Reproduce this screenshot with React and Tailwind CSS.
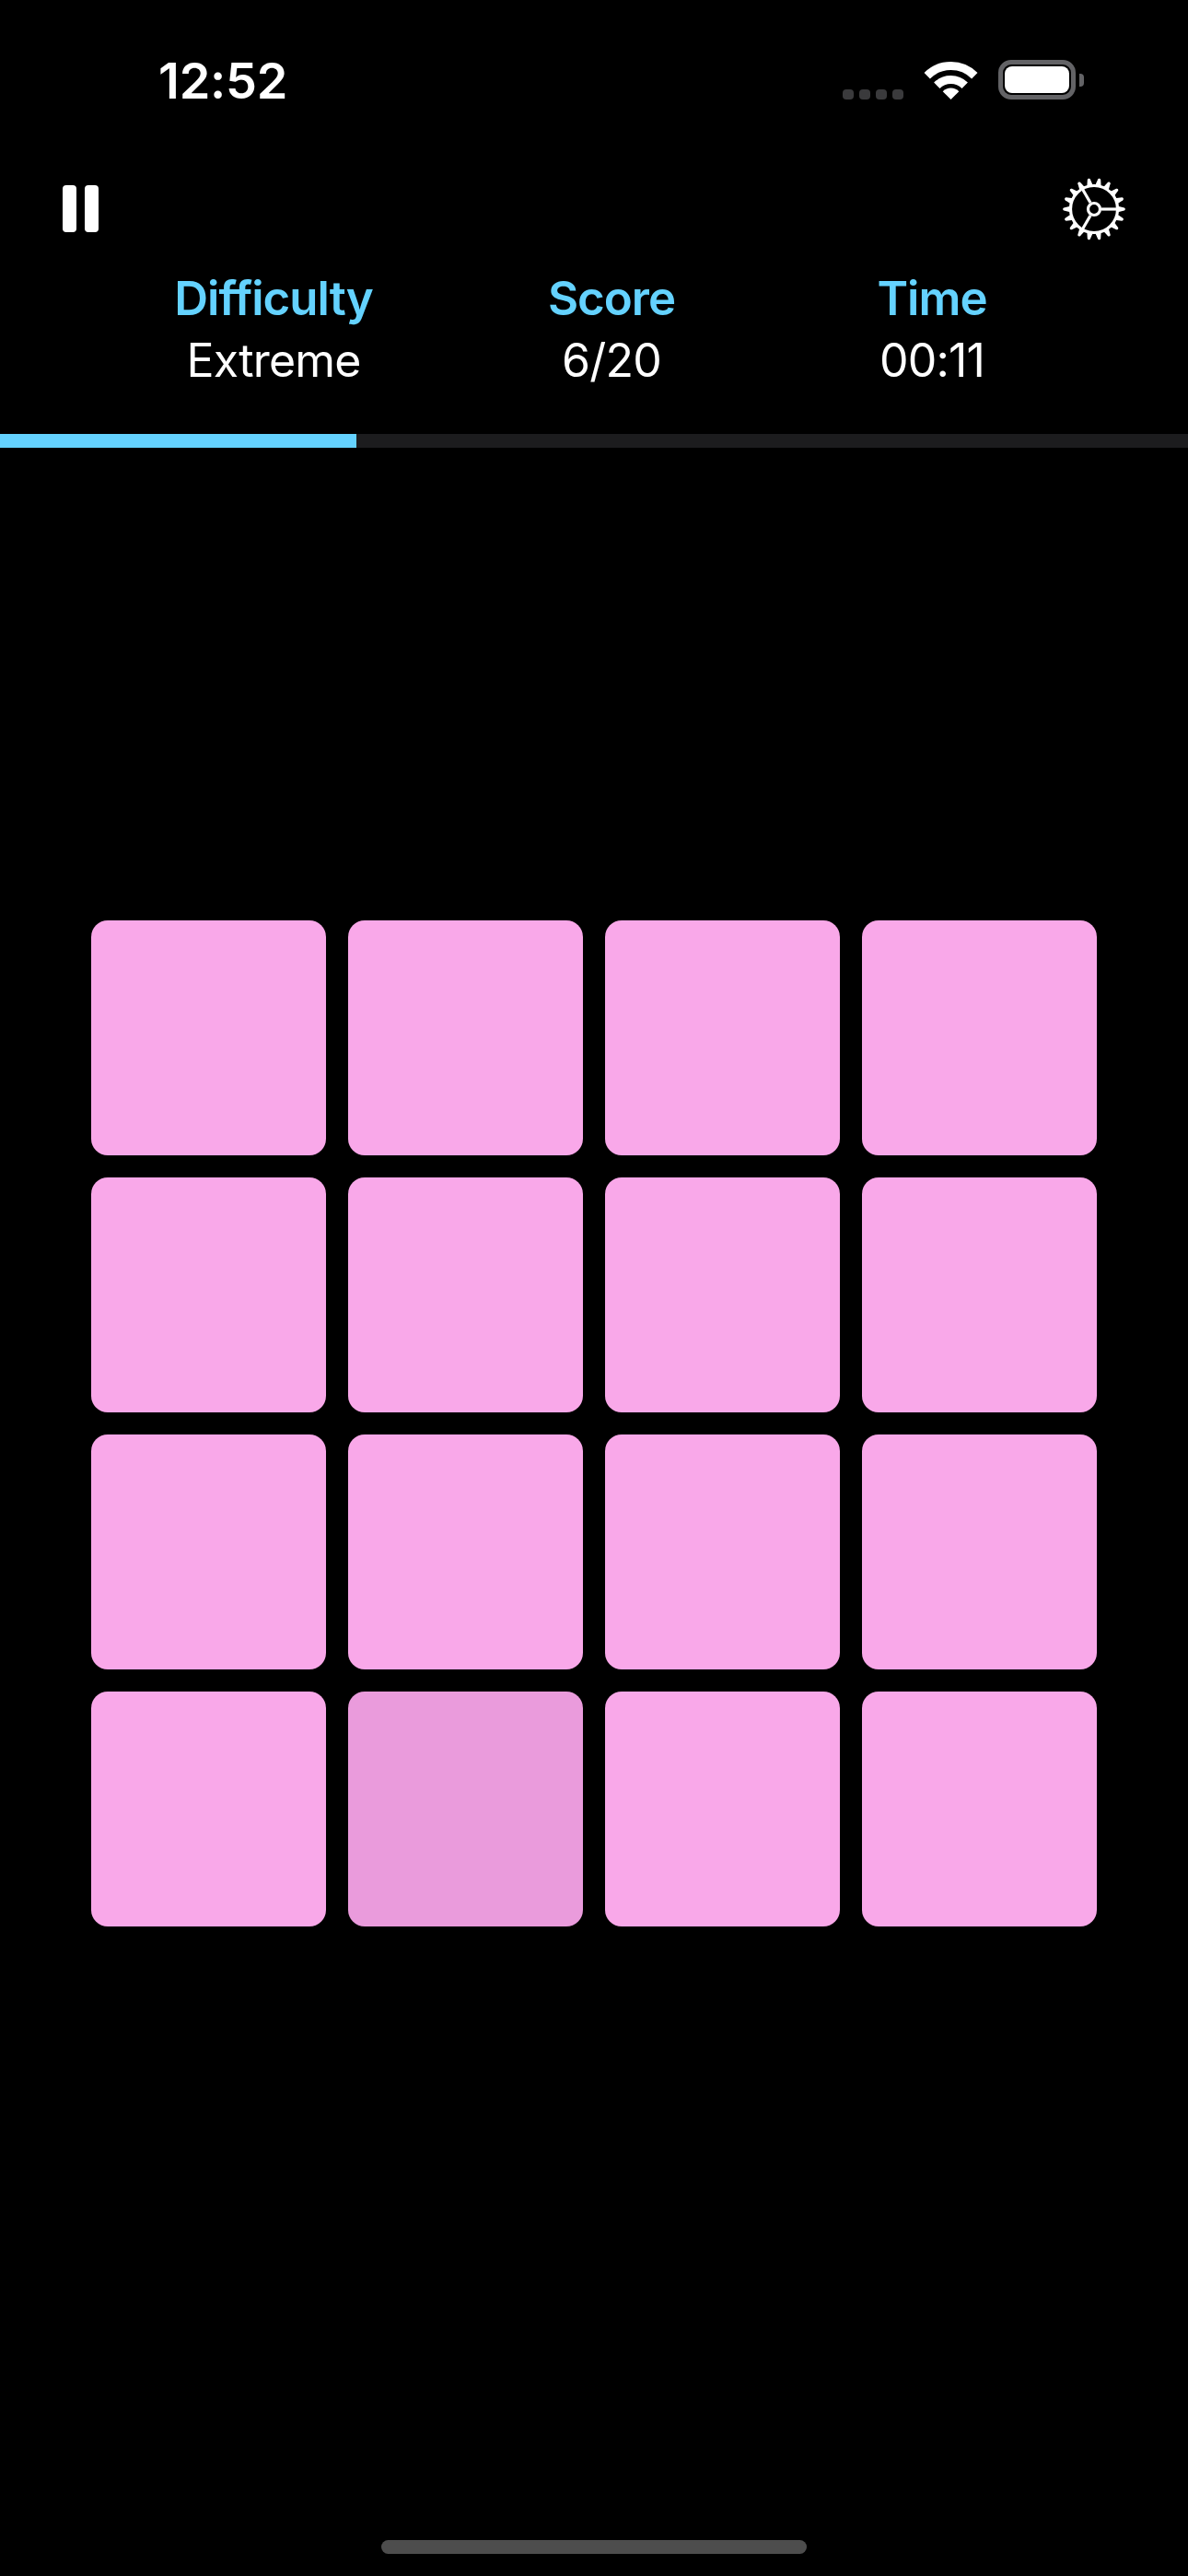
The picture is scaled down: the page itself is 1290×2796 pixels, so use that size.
const tiles = Array.from({ length: 16 }, (_, i) => i);

const teeth = Array.from({ length: 18 }, (_, i) => i * 20);

function GearIcon() {
  return (
    <svg width="70" height="70" viewBox="-35 -35 70 70" fill="none" stroke="white">
      <circle r="25.5" strokeWidth="3.2" />
      <circle r="6.5" strokeWidth="3.2" />
      {[0, 120, 240].map((a) => (
        <line key={a} x1="8" x2="26" strokeWidth="3.2" transform={`rotate(${a})`} />
      ))}
      {teeth.map((a) => (
        <path
          key={a}
          d="M25 -3.4 L32.8 -1.5 A1.6 1.6 0 0 1 32.8 1.5 L25 3.4 Z"
          fill="white"
          stroke="none"
          transform={`rotate(${a})`}
        />
      ))}
    </svg>
  );
}

function WifiIcon() {
  return (
    <svg width="57" height="41" viewBox="0 0 57 41" fill="none" className="overflow-visible">
      <path d="M2.7 15.2A36.5 36.5 0 0 1 54.3 15.2" stroke="white" strokeWidth="9" />
      <path d="M13.3 25.8A21.5 21.5 0 0 1 43.7 25.8" stroke="white" strokeWidth="9" />
      <path d="M28.5 41L19.7 32.2A12.5 12.5 0 0 1 37.3 32.2Z" fill="white" />
    </svg>
  );
}

function Stat({ label, value, className }) {
  return (
    <div className={`w-[300px] text-center ${className}`}>
      <div className="text-[51px] leading-[68px] font-semibold text-[#64d2ff] tracking-[-1px]">{label}</div>
      <div className="-mt-[1px] text-[50px] leading-[68px] font-normal text-white tracking-[-0.8px]">{value}</div>
    </div>
  );
}

export default function App() {
  return (
    <div className="w-[1290px] h-[2796px] bg-black flex flex-col font-['Inter',sans-serif] text-white">
      {/* status bar */}
      <div className="flex items-start h-[200px] pt-[55px]">
        <div className="ml-[172px] text-[54px] leading-[65px] font-semibold tracking-[-0.2px]">12:52</div>
        <div className="ml-auto mr-[113px] mt-[10px] flex items-end">
          <div className="flex gap-[6px] mr-[23px]">
            <span className="w-[12px] h-[11px] rounded-[4px] bg-[#3a3a3c]"></span>
            <span className="w-[12px] h-[11px] rounded-[4px] bg-[#3a3a3c]"></span>
            <span className="w-[12px] h-[11px] rounded-[4px] bg-[#3a3a3c]"></span>
            <span className="w-[12px] h-[11px] rounded-[4px] bg-[#3a3a3c]"></span>
          </div>
          <WifiIcon />
          <div className="ml-[23px] w-[84px] h-[43px] rounded-[14px] border-[5px] border-[#636366] p-[2px]">
            <div className="w-full h-full rounded-[8px] bg-white"></div>
          </div>
          <div className="ml-[4px] mb-[14px] w-[5px] h-[14px] rounded-r-[4px] bg-[#636366]"></div>
        </div>
      </div>

      {/* pause + settings */}
      <div className="flex items-start justify-between h-[100px]">
        <div className="ml-[68px] mt-[1px] flex gap-[9px]">
          <span className="w-[15px] h-[51px] rounded-[4px] bg-white"></span>
          <span className="w-[15px] h-[51px] rounded-[4px] bg-white"></span>
        </div>
        <div className="mr-[67px] -mt-[8px]">
          <GearIcon />
        </div>
      </div>

      {/* stats */}
      <div className="flex h-[181px] -mt-[10px]">
        <Stat label="Difficulty" value="Extreme" className="ml-[147px]" />
        <Stat label="Score" value="6/20" className="ml-[67px]" />
        <Stat label="Time" value="00:11" className="ml-[48px]" />
      </div>

      {/* progress */}
      <div className="h-[15px] bg-[#1c1c1e]">
        <div className="h-full w-[387px] bg-[#64d2ff]"></div>
      </div>

      {/* board */}
      <div className="mt-[513px] ml-[99px] grid grid-cols-[repeat(4,255px)] auto-rows-[255px] gap-[24px]">
        {tiles.map((i) => (
          <div key={i} className={`rounded-[18px] ${i === 13 ? "bg-[#ea9bdc]" : "bg-[#f9a8e9]"}`}></div>
        ))}
      </div>

      {/* home indicator */}
      <div className="mt-auto mb-[24px] mx-auto w-[462px] h-[15px] rounded-[8px] bg-[#4d4d4d]"></div>
    </div>
  );
}
